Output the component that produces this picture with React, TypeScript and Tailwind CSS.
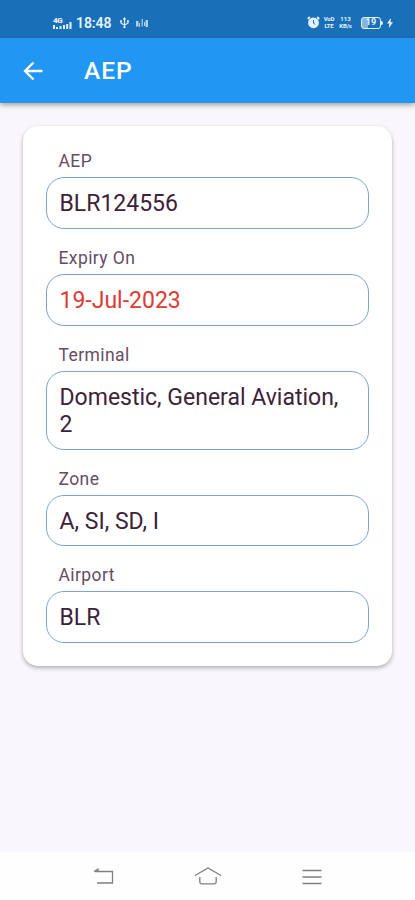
const fields = [
  { label: 'AEP', value: 'BLR124556', box: 'h-[52px]' },
  { label: 'Expiry On', value: '19-Jul-2023', box: 'h-[52px]', expired: true },
  { label: 'Terminal', value: 'Domestic, General Aviation, 2', box: 'h-[78.500px]' },
  { label: 'Zone', value: 'A, SI, SD, I', box: 'h-[51.900px]' },
  { label: 'Airport', value: 'BLR', box: 'h-[52px]' },
];

function StatusBar() {
  return (
    <div className="h-[38px] bg-[#1a70b8] pt-[7px] pl-[53px] pr-[22px] flex items-center justify-between text-[#e6f3ff]">
      <div className="flex items-center">
        {/* Signal */}
        <div className="w-[19px] h-3 flex items-end justify-between">
          <div className="flex flex-col w-[10px]">
            <span className="text-[8px] leading-[7px] font-black tracking-tighter">4G</span>
            <svg width="9" height="5" viewBox="0 0 9 5" fill="currentColor">
              <path d="M0 1h2v4H0zM3 3h2v2H3zM6.500 2h2v3h-2z" />
            </svg>
          </div>
          <svg width="9" height="7" viewBox="0 0 9 7" fill="currentColor">
            <path d="M0 3h2v4H0zM3.200 2h2v5h-2zM6.500 0h2v7h-2z" />
          </svg>
        </div>
        <span className="ml-1 w-[36px] text-[14px] leading-4 font-semibold tracking-[-0.1px] whitespace-nowrap">18:48</span>
        {/* USB */}
        <svg className="ml-[7px]" width="11" height="12" viewBox="0 0 11 13" fill="none" stroke="currentColor" strokeWidth="1.300">
          <path d="M5.500 2v9M1.800 4.500v2.200l3.700 2 3.700-2V4.500" />
          <path d="M5.500 0L3.600 2.800h3.800zM.8 3.400h2v2h-2zM8.200 3.400h2v2h-2z" fill="currentColor" stroke="none" />
          <circle cx="5.500" cy="11" r="1.200" fill="currentColor" stroke="none" />
        </svg>
        <svg className="ml-[6px]" width="12" height="12" viewBox="0 0 12 12" fill="currentColor">
          <path d="M0 4h2.500v5.500H0zM3 6h1v4H3zM5.600 2h1.200v7.500H5.600zM8 5h1v4H8zM9.500 3H12v7H9.500z" opacity=".75" />
        </svg>
      </div>
      <div className="flex items-center">
        {/* Alarm */}
        <svg width="13" height="13" viewBox="0 0 13 13">
          <path d="M2.800 1L.8 3M10.200 1l2 2" stroke="currentColor" strokeWidth="1.800" />
          <circle cx="6.500" cy="6.800" r="5.400" fill="currentColor" />
          <path d="M6.500 4v3.300l1.700 1" stroke="#1a70b8" strokeWidth="1" fill="none" />
        </svg>
        <div className="ml-[3px] w-[12px] flex flex-col items-center gap-px text-[6px] leading-[6px] font-bold tracking-tight">
          <span>VoD</span>
          <span>LTE</span>
        </div>
        <div className="ml-1 w-[13px] flex flex-col items-center gap-px text-[6px] leading-[6px] font-bold whitespace-nowrap">
          <span>113</span>
          <span className="tracking-tight">KB/s</span>
        </div>
        {/* Battery */}
        <div className="ml-[9px] flex items-center">
          <div className="w-5 h-[12px] rounded-[3px] border border-current bg-[linear-gradient(90deg,#84b5df_35%,transparent_35%)] flex items-center justify-center text-[9px] leading-none font-bold">19</div>
          <div className="w-[2px] h-1 bg-current rounded-r-xs" />
        </div>
        <svg className="ml-1" width="6" height="10" viewBox="0 0 6 10" fill="currentColor">
          <path d="M3.800 0L0 5.600h2.300L1.900 10 6 4.200H3.600z" />
        </svg>
      </div>
    </div>
  );
}

function NavBar() {
  return (
    <nav className="h-[48px] bg-[#fefefe] flex items-center justify-between pl-[90px] pr-[89px] pt-px text-[#808080]">
      <svg width="28" height="24" viewBox="0 0 28 24" fill="none" stroke="currentColor" strokeWidth="1.300">
        <path d="M5 6.500h17.500v11.500H7M4 6.500L8 4.200v2.300" />
      </svg>
      <svg width="28" height="24" viewBox="0 0 28 24" fill="none" stroke="currentColor" strokeWidth="1.300">
        <path d="M1 10.500l13-7.500 13 7.500M5.800 12v5q0 1.800 1.800 1.800h12.800q1.800 0 1.800-1.800v-5" />
      </svg>
      <svg width="28" height="24" viewBox="0 0 28 24" fill="none" stroke="currentColor" strokeWidth="1.300">
        <path d="M4.500 5.500H23.500M4.500 12H23.500M4.500 18.500H23.500" />
      </svg>
    </nav>
  );
}

export default function App() {
  return (
    <div className="h-screen flex flex-col bg-[#f9f7fb] font-[Roboto,sans-serif] overflow-hidden">
      <StatusBar />

      {/* App bar */}
      <header className="relative h-[65px] bg-[#2196f3] shadow-[0_2px_5px_rgba(0,0,0,0.35)] flex items-center pl-[23px] text-white">
        <svg width="20" height="20" viewBox="0 0 20 20" fill="none" stroke="currentColor" strokeWidth="2.300">
          <path d="M19.500 10H2.500M10.500 1.500L2 10l8.500 8.500" />
        </svg>
        <h1 className="ml-[41px] pt-px text-[24.500px] leading-8 font-medium tracking-[0.9px]">AEP</h1>
      </header>

      {/* Details */}
      <main className="flex-1 px-[23px] pt-[23px]">
        <div className="h-[540px] bg-white rounded-[15px] shadow-[0_2px_4px_rgba(0,0,0,0.3)] px-[23px] pt-[23px] flex flex-col gap-[17px]">
          {fields.map(field => (
            <div key={field.label}>
              <div className="pl-[12.500px] h-7 text-[17.500px] leading-[24px] tracking-[0.4px] text-[#664d64]">{field.label}</div>
              <div
                className={`${field.box} rounded-[18px] border border-[#7ba6c9] pl-[12.500px] pr-4 pt-3 text-[23px] leading-[27px] ${
                  field.expired ? 'text-[#e03a34]' : 'text-[#3d2239]'
                }`}
              >
                {field.value}
              </div>
            </div>
          ))}
        </div>
      </main>

      <NavBar />
    </div>
  );
}
